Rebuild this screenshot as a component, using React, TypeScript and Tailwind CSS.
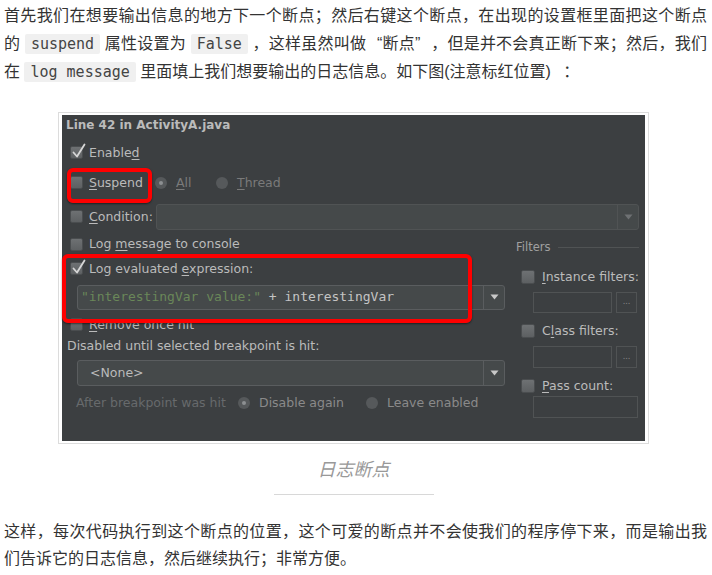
import React from "react";

function Check({ checked = false, big = false }: { checked?: boolean; big?: boolean }) {
  return (
    <span
      className={
        big
          ? "relative inline-block h-[14px] w-[14px] shrink-0 rounded-[2px] border border-[#4a4d4f] bg-linear-to-b from-[#6e7173] to-[#5d6062]"
          : "relative inline-block h-[13px] w-[13px] shrink-0 rounded-[2px] border border-[#4a4d4f] bg-linear-to-b from-[#6e7173] to-[#5d6062]"
      }
    >
      {checked && (
        <svg className="absolute left-[0px] top-[-4px] h-[16px] w-[15px]" viewBox="0 0 15 16">
          <path d="M2.5 9.5 L6 13.5 L13.5 1.5" stroke="#d6d6d6" strokeWidth="1.8" fill="none" strokeLinecap="round" strokeLinejoin="round" />
        </svg>
      )}
    </span>
  );
}

function Radio({ dot = false }: { dot?: boolean }) {
  return (
    <span className="relative inline-flex h-[12px] w-[12px] shrink-0 items-center justify-center rounded-full bg-[#56595b]">
      {dot && <span className="h-[4px] w-[4px] rounded-full bg-[#8d9092]" />}
    </span>
  );
}

function Arrow({ dim = false }: { dim?: boolean }) {
  return (
    <svg width="9" height="6" viewBox="0 0 9 6">
      <path d="M0.5 0.5 L8.5 0.5 L4.5 5.5 Z" fill={dim ? "#6e7173" : "#c8c8c8"} />
    </svg>
  );
}

function Dialog() {
  return (
    <div className="relative h-[326px] w-[583px] bg-[#3c3f41] text-[12.5px] text-[#bbbbbb] [font-family:'DejaVu_Sans',sans-serif]">
      {/* top section */}
      <div className="flex h-[22px] items-center pl-[4px] text-[12px] font-bold">Line 42 in ActivityA.java</div>
      <div className="mt-[4px] flex h-[24px] items-center pl-[8px]">
        <Check checked />
        <span className="ml-[6px]">
          Enable<u className="underline-offset-2">d</u>
        </span>
      </div>
      <div className="mt-[6px] flex h-[24px] items-center pl-[8px]">
        <Check />
        <span className="ml-[6px] w-[66px]">
          <u className="underline-offset-2">S</u>uspend
        </span>
        <Radio dot />
        <span className="ml-[9px] w-[40px] text-[#7a7a7a]">
          <u className="underline-offset-2">A</u>ll
        </span>
        <Radio />
        <span className="ml-[9px] text-[#7a7a7a]">
          <u className="underline-offset-2">T</u>hread
        </span>
      </div>
      <div className="mt-[9px] flex h-[26px] items-center pl-[8px]">
        <Check />
        <span className="ml-[6px] w-[67px]">
          <u className="underline-offset-2">C</u>ondition:
        </span>
        <div className="flex h-[26px] w-[483px] rounded-[3px] border border-[#505354] bg-[#45494a]">
          <div className="flex-1" />
          <div className="flex w-[21px] items-center justify-center border-l border-[#505354]">
            <Arrow dim />
          </div>
        </div>
      </div>

      {/* two columns */}
      <div className="flex">
        <div className="w-[454px]">
          <div className="mt-[4px] flex h-[21px] items-center pl-[8px]">
            <Check />
            <span className="ml-[6px]">
              Log <u className="underline-offset-2">m</u>essage to console
            </span>
          </div>
          <div className="mt-[3px] flex h-[22px] items-center pl-[8px]">
            <Check checked />
            <span className="ml-[6px]">
              Log evaluated <u className="underline-offset-2">e</u>xpression:
            </span>
          </div>
          <div className="ml-[15px] mt-[5px] flex h-[25px] w-[428px] rounded-[3px] border border-[#5a5d5f] bg-[#45494a]">
            <div className="flex flex-1 items-center pl-[3px] text-[13px] [font-family:'DejaVu_Sans_Mono',monospace]">
              <span className="whitespace-pre text-[#6a8759]">"interestingVar value:"</span>
              <span className="whitespace-pre text-[#c4c4c4]"> + interestingVar</span>
            </div>
            <div className="flex w-[21px] items-center justify-center border-l border-[#5a5d5f]">
              <Arrow />
            </div>
          </div>
          <div className="mt-[4px] flex h-[22px] items-center pl-[8px]">
            <Check />
            <span className="ml-[6px]">
              <u className="underline-offset-2">R</u>emove once hit
            </span>
          </div>
          <div className="flex h-[20px] items-center pl-[5px]">Disabled until selected breakpoint is hit:</div>
          <div className="ml-[15px] mt-[4px] flex h-[26px] w-[428px] rounded-[3px] border border-[#5a5d5f] bg-[#45494a]">
            <div className="flex flex-1 items-center pl-[12px]">&lt;None&gt;</div>
            <div className="flex w-[21px] items-center justify-center border-l border-[#5a5d5f]">
              <Arrow />
            </div>
          </div>
          <div className="mt-[6px] flex h-[22px] items-center pl-[14px]">
            <span className="w-[162px] text-[#676a6c]">After breakpoint was hit</span>
            <Radio dot />
            <span className="ml-[9px] w-[107px] text-[#8a8a8a]">Disable again</span>
            <Radio />
            <span className="ml-[9px] text-[#8a8a8a]">Leave enabled</span>
          </div>
        </div>

        <div className="w-[123px]">
          <div className="mt-[8px] flex h-[20px] items-center text-[11.5px] text-[#a0a0a0]">
            <span>Filters</span>
            <span className="ml-[8px] h-px flex-1 bg-[#505354]" />
          </div>
          <div className="mt-[8px] flex h-[22px] items-center pl-[5px]">
            <Check big />
            <span className="ml-[7px] whitespace-nowrap">
              <u className="underline-offset-2">I</u>nstance filters:
            </span>
          </div>
          <div className="mt-[4px] flex h-[21px] pl-[17px]">
            <div className="w-[79px] border border-[#505354]" />
            <div className="ml-[4px] flex w-[21px] items-center justify-center border border-[#505354] text-[8px] leading-none text-[#8a8a8a]">
              ...
            </div>
          </div>
          <div className="mt-[7px] flex h-[22px] items-center pl-[5px]">
            <Check big />
            <span className="ml-[7px] whitespace-nowrap">
              C<u className="underline-offset-2">l</u>ass filters:
            </span>
          </div>
          <div className="mt-[4px] flex h-[22px] pl-[17px]">
            <div className="w-[79px] border border-[#505354]" />
            <div className="ml-[4px] flex w-[21px] items-center justify-center border border-[#505354] text-[8px] leading-none text-[#8a8a8a]">
              ...
            </div>
          </div>
          <div className="mt-[8px] flex h-[20px] items-center pl-[5px]">
            <Check big />
            <span className="ml-[7px] whitespace-nowrap">
              <u className="underline-offset-2">P</u>ass count:
            </span>
          </div>
          <div className="ml-[17px] h-[22px] w-[105px] border border-[#505354]" />
        </div>
      </div>

      {/* red highlight overlays */}
      <div className="pointer-events-none absolute left-[5px] top-[53px] h-[35px] w-[85px] rounded-[6px] border-[4px] border-[#ff0000] shadow-[0_1px_2px_rgba(0,0,0,0.5)]" />
      <div className="pointer-events-none absolute left-[0px] top-[139px] h-[69px] w-[410px] rounded-[6px] border-[4px] border-[#ff0000] shadow-[0_1px_2px_rgba(0,0,0,0.5)]" />
    </div>
  );
}

function Code({ children }: { children: React.ReactNode }) {
  return (
    <code className="rounded-[2px] bg-[#f0f0f0] px-[6px] py-[1px] text-[15px] text-[#444] [font-family:'DejaVu_Sans_Mono',monospace]">
      {children}
    </code>
  );
}

export default function App() {
  return (
    <div className="min-h-[575px] w-[712px] bg-white pl-[4px] pt-[2px] text-[16px] leading-[27.5px] text-[#333] [font-family:'Liberation_Sans','Noto_Sans_CJK_SC',sans-serif]">
      <p className="w-[703px] text-justify">
        首先我们在想要输出信息的地方下一个断点；然后右键这个断点，在出现的设置框里面把这个断点的 <Code>suspend</Code> 属性设置为 <Code>False</Code> ，这样虽然叫做<span className="inline-block w-[16px] text-right">“</span>断点<span className="inline-block w-[16px] text-left">”</span>，但是并不会真正断下来；然后，我们在 <Code>log message</Code> 里面填上我们想要输出的日志信息。如下图(注意标红位置) <span className="pl-[8px]">：</span>
      </p>
      <div className="flex w-[699px] flex-col items-center">
        <div className="mt-[25px] border border-[#dcdcdc] px-[3px] py-[2px]">
          <Dialog />
        </div>
        <div className="mt-[13px] text-[18px] italic leading-[27px] text-[#999]">日志断点</div>
        <div className="mt-[10px] h-px w-[160px] bg-[#d8d8d8]" />
      </div>
      <p className="mt-[23px] w-[703px] text-justify">
        这样，每次代码执行到这个断点的位置，这个可爱的断点并不会使我们的程序停下来，而是输出我们告诉它的日志信息，然后继续执行；非常方便。
      </p>
    </div>
  );
}
